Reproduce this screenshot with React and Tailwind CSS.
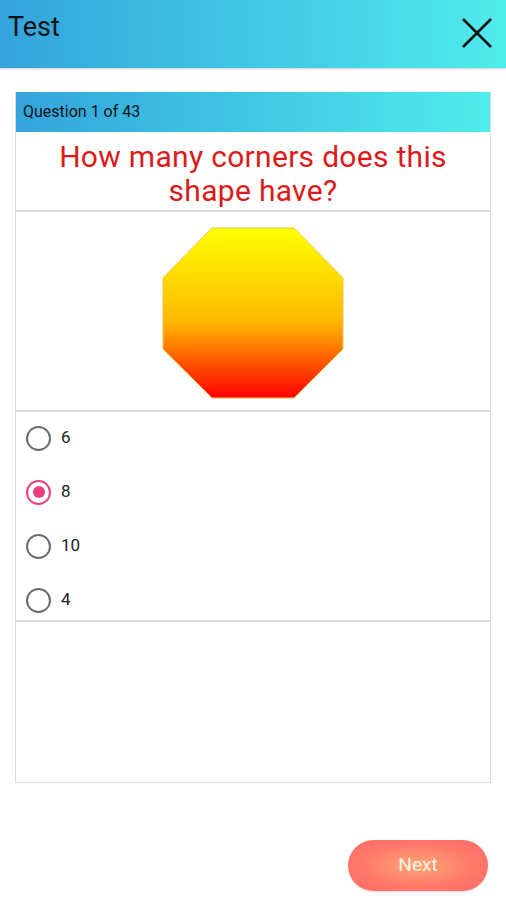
import { useState } from 'react';

const OPTIONS = ['6', '8', '10', '4'];

function Octagon() {
  return (
    <svg width="184" height="174" viewBox="0 0 184 174">
      <defs>
        <linearGradient id="octGrad" x1="0" y1="0" x2="0" y2="1">
          <stop offset="0%" stopColor="#ffff00" />
          <stop offset="55%" stopColor="#ffb800" />
          <stop offset="100%" stopColor="#ff0000" />
        </linearGradient>
      </defs>
      <polygon
        points="51,2 133,2 182,52 182,123 133,172 51,172 2,123 2,52"
        fill="url(#octGrad)"
        stroke="#f2c23a"
        strokeWidth="1"
      />
    </svg>
  );
}

function Radio({ checked }) {
  return (
    <span
      className={`flex h-[25px] w-[25px] items-center justify-center rounded-full border-2 ${
        checked ? 'border-[#ec407a]' : 'border-[#6b6b6b]'
      }`}
    >
      {checked && <span className="h-[12px] w-[12px] rounded-full bg-[#ec407a]" />}
    </span>
  );
}

export default function App() {
  const [selected, setSelected] = useState('8');

  return (
    <div className="flex h-[900px] w-[506px] flex-col bg-white font-['Roboto',sans-serif]">
      <header className="flex h-[68px] items-center justify-between bg-gradient-to-r from-[#34a3dc] to-[#50ecec] pl-[8px] pr-[12px] shadow-[0_1px_2px_rgba(0,0,0,0.2)]">
        <h1 className="-mt-[14px] text-[27px] text-[#111]">Test</h1>
        <svg width="34" height="34" viewBox="0 0 34 34" className="-mt-[2px]">
          <path d="M3 3 L31 31 M31 3 L3 31" stroke="#111" strokeWidth="2.6" />
        </svg>
      </header>

      <div className="mx-[15px] mt-[24px] flex flex-col border-x border-b border-[#dcdcdc]">
        <div className="flex h-[40px] items-center bg-gradient-to-r from-[#34a3dc] to-[#50ecec] px-[7px] text-[16px] text-[#111]">
          Question 1 of 43
        </div>
        <div className="flex h-[80px] items-center justify-center border-b-2 border-[#dcdcdc] px-[30px] pt-[5px] text-center text-[30px] leading-[34px] tracking-[0.3px] text-[#dd1a1a]">
          How many corners does this shape have?
        </div>
        <div className="flex h-[200px] items-center justify-center border-b-2 border-[#dcdcdc] pt-[4px]">
          <Octagon />
        </div>
        <div className="h-[210px] border-b-2 border-[#dcdcdc]">
          <div className="-mt-[1px] flex flex-col">
            {OPTIONS.map(o => (
              <button
                key={o}
                onClick={() => setSelected(o)}
                className="flex h-[54px] items-center gap-[10px] pl-[10px] text-[17px] text-[#222]"
              >
                <Radio checked={selected === o} />
                <span>{o}</span>
              </button>
            ))}
          </div>
        </div>
        <div className="h-[160px]" />
      </div>

      <div className="mt-auto flex justify-end pr-[18px] pb-[9px]">
        <button className="h-[51px] w-[140px] rounded-full bg-[radial-gradient(ellipse_at_center,#ffa776_0%,#ff7a6a_55%,#ff6767_100%)] text-[19px] text-[#fff4e6] shadow-[0_1px_2px_rgba(0,0,0,0.15)]">
          Next
        </button>
      </div>
    </div>
  );
}
